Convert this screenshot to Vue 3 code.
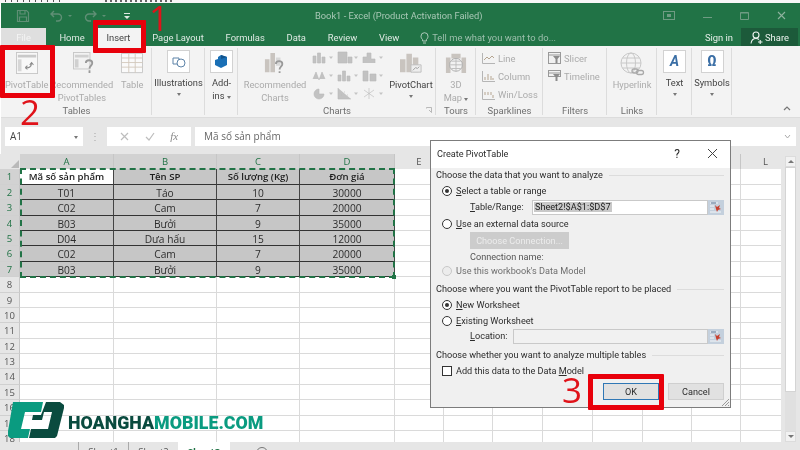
<template>
  <div class="page">
    <div class="top-strip"></div>
    <header class="titlebar">
      <div class="qat">
        <svg class="qat-save" width="14" height="14" viewBox="0 0 14 14"><path d="M1.5 1.5h9l2 2v9h-11z M4 1.5v3.5h5v-3.5 M3.5 12.5v-4.5h7v4.5" fill="none" stroke="#5f8f75" stroke-width="1.2"/></svg>
        <svg class="qat-undo" width="13" height="12" viewBox="0 0 13 12"><path d="M4 1L1 4l3 3M1 4h7a3.4 3.4 0 0 1 0 7H6" fill="none" stroke="#5f8f75" stroke-width="1.4"/></svg>
        <span class="qat-drop"></span>
        <svg class="qat-redo" width="13" height="12" viewBox="0 0 13 12"><path d="M9 1l3 3-3 3M12 4H5a3.4 3.4 0 0 0 0 7h2" fill="none" stroke="#5f8f75" stroke-width="1.4"/></svg>
        <span class="qat-drop"></span>
        <svg class="qat-more" width="8" height="8" viewBox="0 0 8 8"><path d="M1 1h6v1H1zM1 4h6L4 7z" fill="#dfe9e3"/></svg>
      </div>
      <div class="doc-title">Book1 - Excel (Product Activation Failed)</div>
      <div class="win-btns">
        <svg width="12" height="10" viewBox="0 0 12 10"><rect x="0.5" y="0.5" width="11" height="8" fill="none" stroke="#6f9c83"/><rect x="4" y="3" width="4" height="3" fill="#6f9c83"/></svg>
        <svg width="9" height="10" viewBox="0 0 9 10"><path d="M0 6.5h9" stroke="#6f9c83"/></svg>
        <svg width="9" height="10" viewBox="0 0 9 10"><path d="M.5 1.5h8v7h-8z" fill="none" stroke="#6f9c83"/><path d="M.5 2h8" stroke="#6f9c83"/></svg>
        <svg width="9" height="10" viewBox="0 0 9 10"><path d="M1 1l7 7M8 1l-7 7" stroke="#8fb39f" stroke-width="1.1"/></svg>
      </div>
    </header>
    <nav class="tabs">
      <div class="file-tab">File</div>
      <div class="tab" v-for="t in tabs" :key="t" :class="{ on: t === 'Insert' }">{{ t }}</div>
      <div class="tell">
        <svg width="9" height="13" viewBox="0 0 9 13"><path d="M2.6 8.6C1.6 7.7 1 6.6 1 5.2a3.5 3.5 0 0 1 7 0C8 6.6 7.4 7.7 6.4 8.6V10H2.6zM3 12h3" fill="none" stroke="#bcd3c6" stroke-width=".9"/></svg>
        <span>Tell me what you want to do...</span>
      </div>
      <div class="sign">Sign in</div>
      <div class="share">
        <svg width="13" height="13" viewBox="0 0 13 13"><circle cx="6" cy="4" r="3" fill="none" stroke="#eef4f0" stroke-width="1.1"/><path d="M1 12.5c.4-3 2.3-5 5-5 1.2 0 2.2.4 3 1M8 11h4.5M10.2 9v4" fill="none" stroke="#eef4f0" stroke-width="1.1"/></svg>
        <span>Share</span>
      </div>
    </nav>

    <section class="ribbon">
      <div class="grp g-tables">
        <div class="grp-body">
          <div class="big b-pivot">
            <svg viewBox="0 0 24 24"><rect x=".5" y=".5" width="23" height="23" fill="#f8f8f8" stroke="#c6c6c6"/><path d="M2 3h20v3H2z" fill="#c9c9c9"/><path d="M2 8h4v13H2z" fill="#d6d6d6"/><path d="M10 17c4 1 7-1 7-5M15 14l2-2.5 2 2.5M10 17l2.5-2M10 17l2.5 2" fill="none" stroke="#8a8a8a" stroke-width="1.1"/></svg>
            <span>PivotTable</span>
          </div>
          <div class="big b-rec">
            <svg viewBox="0 0 24 24"><rect x=".5" y=".5" width="18" height="18" fill="#f2f2f2" stroke="#c6c6c6"/><path d="M2 3h15v3H2zM2 8h4v9H2z" fill="#d0d0d0"/><path d="M14 12c0-4 7-4 7 0 0 3-3 3-3 6M18 20v3" fill="none" stroke="#9a9a9a" stroke-width="2"/></svg>
            <span>Recommended<br>PivotTables</span>
          </div>
          <div class="big b-table">
            <svg viewBox="0 0 24 22"><path d="M.5.5h23v21H.5z" fill="#fafafa" stroke="#c4c4c4"/><path d="M.5 5.5h23M.5 10.5h23M.5 15.5h23M8.5.5v21M15.5.5v21" stroke="#d2c8bc" fill="none"/></svg>
            <span>Table</span>
          </div>
        </div>
        <div class="grp-label">Tables</div>
      </div>
      <div class="grp g-ill">
        <div class="grp-body">
          <div class="big strong">
            <div class="box-ic">
              <svg width="14" height="14" viewBox="0 0 14 14"><path d="M1 3h6v6H1z" fill="#fff" stroke="#5d83a8"/><circle cx="9" cy="8" r="4" fill="#fff" stroke="#5d83a8"/></svg>
            </div>
            <span>Illustrations</span>
            <i class="caret"></i>
          </div>
        </div>
        <div class="grp-label"></div>
      </div>
      <div class="grp g-add">
        <div class="grp-body">
          <div class="big strong">
            <div class="box-ic">
              <svg width="13" height="13" viewBox="0 0 13 13"><path d="M6 0l6 2v8l-6 3-6-3V5l3-1V2z" fill="#1a6fb5"/><path d="M6 0l6 2-6 2z" fill="#12548c"/></svg>
            </div>
            <span>Add-<br>ins <i class="caret inline"></i></span>
          </div>
        </div>
        <div class="grp-label"></div>
      </div>
      <div class="grp g-charts">
        <div class="grp-body">
          <div class="big b-rchart">
            <svg viewBox="0 0 24 24"><path d="M1 8h5v14H1zM7 1h5v21H7z" fill="#c9c4bf"/><path d="M13 6h5v9h-5z" fill="#d8d8d8"/><path d="M13 13c0-4 7-4 7 0 0 3-3 3-3 6M17 21v2" fill="none" stroke="#9a9a9a" stroke-width="2"/></svg>
            <span>Recommended<br>Charts</span>
          </div>
          <div class="mini-grid">
            <svg v-for="(c, i) in miniCharts" :key="i" width="25" height="13" viewBox="0 0 25 13">
              <path :d="c" fill="#c2c2c2" stroke="#b8b8b8" stroke-width=".6"/>
              <path d="M17 5.5h4L19 8z" fill="#c4c4c4"/>
            </svg>
          </div>
          <div class="big b-pchart">
            <svg viewBox="0 0 24 24"><path d="M0 8h6v14H0zM7 2h6v20H7zM14 6h6v16h-6z" fill="#c9c4bf"/><path d="M12 14h11v8H12z" fill="#ededed" stroke="#bdbdbd"/><path d="M14 20l3-3 2 1 2-2" fill="none" stroke="#9a9a9a"/></svg>
            <span class="dark">PivotChart</span>
            <i class="caret"></i>
          </div>
        </div>
        <div class="grp-label">Charts</div>
        <svg class="launcher" width="6" height="6" viewBox="0 0 6 6"><path d="M.5.5h5v5M.5.5v1M3 3l2.5 2.5" fill="none" stroke="#aaa" stroke-width=".8"/></svg>
      </div>
      <div class="grp g-tours">
        <div class="grp-body">
          <div class="big">
            <svg viewBox="0 0 24 24"><path d="M1 6h5v17H1zM18 6h5v17h-5zM7 2h10v5H7z" fill="#c9c4bf"/><circle cx="12" cy="14" r="7" fill="#f2f2f2" stroke="#aaa"/><path d="M5 14h14M12 7v14M7 10h10M7 18h10" stroke="#bbb" fill="none"/></svg>
            <span>3D<br>Map <i class="caret inline"></i></span>
          </div>
        </div>
        <div class="grp-label">Tours</div>
      </div>
      <div class="grp g-spark">
        <div class="grp-body stack">
          <div class="row-btn" v-for="s in sparks" :key="s.t">
            <svg width="13" height="11" viewBox="0 0 13 11"><path d="M.5 0v10.5H13" fill="none" stroke="#b5b5b5"/><path :d="s.d" fill="none" stroke="#b5a591"/></svg>
            <span>{{ s.t }}</span>
          </div>
        </div>
        <div class="grp-label">Sparklines</div>
      </div>
      <div class="grp g-filter">
        <div class="grp-body stack">
          <div class="row-btn" v-for="s in filters" :key="s.t">
            <svg width="13" height="12" viewBox="0 0 13 12"><rect x=".5" y=".5" width="12" :height="s.h" fill="#f1f1f1" stroke="#999"/><path d="M.5 3h12" stroke="#999"/><path d="M5 4h7L9.5 7v4H7.5V7z" fill="#8c8c8c"/></svg>
            <span>{{ s.t }}</span>
          </div>
        </div>
        <div class="grp-label">Filters</div>
      </div>
      <div class="grp g-links">
        <div class="grp-body">
          <div class="big">
            <svg viewBox="0 0 26 26"><circle cx="12" cy="11" r="10" fill="none" stroke="#c8c8c8"/><ellipse cx="12" cy="11" rx="4.5" ry="10" fill="none" stroke="#c8c8c8"/><path d="M2 11h20M3.5 6h17M3.5 16h17" stroke="#c8c8c8"/><rect x="13" y="17" width="6" height="4" rx="2" fill="none" stroke="#aaa" stroke-width="1.3"/><rect x="17.5" y="18.5" width="7" height="4" rx="2" fill="none" stroke="#aaa" stroke-width="1.3"/></svg>
            <span>Hyperlink</span>
          </div>
        </div>
        <div class="grp-label">Links</div>
      </div>
      <div class="grp g-text">
        <div class="grp-body">
          <div class="big strong">
            <div class="box-ic glyph italic">A</div>
            <span>Text</span>
            <i class="caret"></i>
          </div>
        </div>
        <div class="grp-label"></div>
      </div>
      <div class="grp g-sym">
        <div class="grp-body">
          <div class="big strong">
            <div class="box-ic glyph">Ω</div>
            <span>Symbols</span>
            <i class="caret"></i>
          </div>
        </div>
        <div class="grp-label"></div>
      </div>
      <svg class="collapse" width="8" height="5" viewBox="0 0 8 5"><path d="M1 4l3-3 3 3" fill="none" stroke="#777" stroke-width="1.2"/></svg>
    </section>

    <section class="formula">
      <div class="namebox"><span>A1</span><i class="caret"></i></div>
      <span class="dots">⋮</span>
      <div class="fx-btns">
        <svg width="9" height="9" viewBox="0 0 9 9"><path d="M1 1l7 7M8 1l-7 7" stroke="#bdbdbd" stroke-width="1.2"/></svg>
        <svg width="10" height="9" viewBox="0 0 10 9"><path d="M1 5l3 3 5-7" fill="none" stroke="#bdbdbd" stroke-width="1.2"/></svg>
        <span class="fx">fx</span>
      </div>
      <div class="fx-input">
        <span>Mã số sản phẩm</span>
        <svg width="7" height="5" viewBox="0 0 7 5"><path d="M1 1l2.5 3L6 1" fill="none" stroke="#aaa"/></svg>
      </div>
    </section>

    <section class="sheet-wrap">
      <div class="sheet">
        <div class="grid">
          <div class="corner"><i></i></div>
          <div class="ch" v-for="c in cols" :key="c.n" :class="{ sel: c.sel }" :style="{ width: c.w + 'px' }">{{ c.n }}</div>
          <template v-for="r in rows" :key="r.n">
            <div class="rh" :class="{ sel: r.n <= 7 }">{{ r.n }}</div>
            <div
              v-for="(c, i) in cols"
              :key="c.n"
              class="cell"
              :class="cellClass(r, i)"
              :style="{ width: c.w + 'px' }"
            >{{ r.v[i] }}</div>
          </template>
        </div>
        <div class="scrollbar">
          <span class="sb-btn"><i class="up"></i></span>
          <span class="sb-thumb"></span>
          <span class="sb-track"></span>
          <span class="sb-btn"><i class="down"></i></span>
        </div>
      </div>
      <footer class="sheetbar">
        <span class="sb-left"></span>
        <span class="stab">Sheet1</span>
        <span class="stab">Sheet2</span>
        <span class="stab active">Sheet3</span>
        <span class="plus"></span>
      </footer>
    </section>

    <!-- overlays -->
    <div class="marquee"></div>

    <div class="dialog">
      <div class="dlg-head">
        <span>Create PivotTable</span>
        <div class="dlg-btns"><b>?</b>
          <svg width="11" height="11" viewBox="0 0 11 11"><path d="M1 1l9 9M10 1l-9 9" stroke="#444" stroke-width="1"/></svg>
        </div>
      </div>
      <div class="dlg-body">
        <div class="legend"><span>Choose the data that you want to analyze</span></div>
        <label class="opt"><i class="radio checked"></i><span><u>S</u>elect a table or range</span></label>
        <div class="field f-range">
          <span class="fl"><u>T</u>able/Range:</span>
          <div class="input"><em>Sheet2!$A$1:$D$7</em></div>
          <svg class="picker" width="16" height="15" viewBox="0 0 16 15"><rect width="16" height="15" fill="#c4d0dd"/><path d="M2 3h8M2 6h4M2 9h4M2 12h11" stroke="#f4f7fa"/><path d="M3 3h5" stroke="#5b7594"/><path d="M7 5l2 2 3-2-1 3 2 1-3 1-1 2-1-3z" fill="#c8402f"/></svg>
        </div>
        <label class="opt o-ext"><i class="radio"></i><span><u>U</u>se an external data source</span></label>
        <button class="conn">Choose Connection...</button>
        <div class="conn-name">Connection name:</div>
        <label class="opt off"><i class="radio"></i><span>Use this workbook's Data Model</span></label>

        <div class="legend l2"><span>Choose where you want the PivotTable report to be placed</span></div>
        <label class="opt"><i class="radio checked"></i><span><u>N</u>ew Worksheet</span></label>
        <label class="opt o-exist"><i class="radio"></i><span><u>E</u>xisting Worksheet</span></label>
        <div class="field f-loc">
          <span class="fl"><u>L</u>ocation:</span>
          <div class="input blank"></div>
          <svg class="picker" width="16" height="15" viewBox="0 0 16 15"><rect width="16" height="15" fill="#c4d0dd"/><path d="M2 3h8M2 6h4M2 9h4M2 12h11" stroke="#f4f7fa"/><path d="M3 3h5" stroke="#5b7594"/><path d="M7 5l2 2 3-2-1 3 2 1-3 1-1 2-1-3z" fill="#c8402f"/></svg>
        </div>

        <div class="legend l3"><span>Choose whether you want to analyze multiple tables</span></div>
        <label class="opt chk"><i class="check"></i><span>Add this data to the Data <u>M</u>odel</span></label>
        <div class="dlg-actions">
          <button class="ok">OK</button>
          <button>Cancel</button>
        </div>
      </div>
      <svg class="grip" width="10" height="10" viewBox="0 0 10 10"><path d="M9 2L2 9M9 5L5 9M9 8L8 9" stroke="#9a9a9a"/></svg>
    </div>

    <span class="mark m-insert"></span>
    <span class="mark m-pivot"></span>
    <span class="mark m-ok"></span>
    <span class="num n1">1</span>
    <span class="num n2">2</span>
    <span class="num n3">3</span>

    <div class="logo">
      <svg width="58" height="40" viewBox="0 0 58 40">
        <path d="M6 2h30l-2 10H18l-4 17h9l-2 9H3l-2-2v-5z" fill="#0a9b80"/>
        <path d="M39 2h14l4 3v3l-7 28-2 2H22l2-9h17l4-17h-8l-2 8H25l1-5h8z" fill="#0a4b3f"/>
      </svg>
      <div class="logo-text">HOANGHA<span>MOBILE.COM</span></div>
    </div>
  </div>
</template>

<script setup>
const tabs = ['Home', 'Insert', 'Page Layout', 'Formulas', 'Data', 'Review', 'View']

const miniCharts = [
  'M1 5h3v7H1zM5.5 2h3v10h-3zM10 6h3v6h-3z',
  'M1 1h9v11H1zM11 6h4v6h-4z',
  'M1 12V6h4V2h4v6h4v4',
  'M1 10l3-7 3 8 3-8 3 7',
  'M1 6h3v6H1zM5.5 2h3v10h-3zM10 7h3v5h-3z',
  'M1 2h5v10H1zM8 5h6v7H8z',
  'M7 2a5 5 0 1 0 5 5H7z',
  'M1 1v11h13M4 8h1M7 5h1M10 8h1',
  'M7 1v11M2 3l10 7M12 3L2 10',
]

const sparks = [
  { t: 'Line', d: 'M2 7l3-3 2 2 3-3 2 2' },
  { t: 'Column', d: 'M3 9V6M6 9V3M9 9V5M11 9V7' },
  { t: 'Win/Loss', d: 'M3 3v3M6 3v3M9 3v3M11 6v3' },
]

const filters = [
  { t: 'Slicer', h: 11 },
  { t: 'Timeline', h: 6 },
]

const cols = [
  { n: 'A', w: 94, sel: true },
  { n: 'B', w: 103, sel: true },
  { n: 'C', w: 83, sel: true },
  { n: 'D', w: 95, sel: true },
  { n: 'E', w: 49 },
  { n: 'F', w: 49 },
  { n: 'G', w: 50 },
  { n: 'H', w: 50 },
  { n: 'I', w: 50 },
  { n: 'J', w: 49 },
  { n: 'K', w: 49 },
  { n: 'L', w: 50 },
]

const data = [
  ['Mã số sản phẩm', 'Tên SP', 'Số lượng (Kg)', 'Đơn giá'],
  ['T01', 'Táo', '10', '30000'],
  ['C02', 'Cam', '7', '20000'],
  ['B03', 'Bưởi', '9', '35000'],
  ['D04', 'Dưa hấu', '15', '12000'],
  ['C02', 'Cam', '7', '20000'],
  ['B03', 'Bưởi', '9', '35000'],
]

const rows = Array.from({ length: 18 }, (_, i) => ({ n: i + 1, v: data[i] || [] }))

function cellClass(r, i) {
  if (r.n > 7 || i > 3) return ''
  return {
    tbl: true,
    head: r.n === 1,
    first: r.n === 1 && i === 0,
  }
}
</script>

<style>
html, body { margin: 0; background: #fff; }
</style>

<style scoped>
.page {
  position: relative; width: 800px; height: 450px; overflow: hidden;
  background: #fff; color: #333;
  font-family: Roboto, "Noto Sans", sans-serif; font-size: 10px;
  filter: blur(0.35px);
}
.top-strip {
  height: 3px; background-color: #f7f7f7;
  background-image:
    repeating-linear-gradient(90deg, #555 0 1px, transparent 1px 6px),
    repeating-linear-gradient(90deg, #666 0 2px, transparent 2px 5px);
  background-size: 60px 2px, 70px 2px;
  background-position: 5px 0, 105px 0;
  background-repeat: no-repeat;
}
.titlebar {
  display: flex; align-items: center; height: 25px; margin-left: 1px;
  background: #217346; position: relative;
}
.qat { display: flex; align-items: center; padding-left: 15px; width: 300px; }
.qat-save { margin-right: 20px; }
.qat-undo { margin-right: 5px; }
.qat-redo { margin: 0 5px 0 12px; }
.qat-drop { width: 0; height: 0; border: 2px solid transparent; border-top: 2px solid #5f8f75; margin-top: 2px; }
.qat-more { margin-left: 17px; }
.doc-title { position: absolute; left: 314px; top: 7px; font-size: 9.3px; color: #a9c8b6; white-space: nowrap; }
.win-btns { margin-left: auto; display: flex; align-items: center; gap: 28px; padding-right: 14px; }

.tabs { display: flex; align-items: stretch; height: 18px; margin-left: 1px; background: #217346; color: #dfeae4; font-size: 9.4px; }
.file-tab { width: 45px; background: #dfdfdf; color: #f4f4f4; display: flex; align-items: center; justify-content: center; margin-right: 2.5px; }
.tab { padding: 0 10.9px; display: flex; align-items: center; white-space: nowrap; }
.tab.on { background: #f3f3f3; color: #444; }
.tell { display: flex; align-items: center; gap: 3px; margin-left: 10px; color: #9dbfad; font-size: 9.4px; }
.sign { margin-left: auto; display: flex; align-items: center; margin-right: 8px; color: #e6efe9; }
.share { width: 57px; background: #1c5a3a; display: flex; align-items: center; gap: 2px; justify-content: center; color: #eef4f0; margin-right: 2px; }

.ribbon { display: flex; height: 72px; background: #f3f3f3; border-bottom: 1px solid #dcdcdc; position: relative; margin-left: 1px; box-sizing: border-box; color: #ababab; }
.grp { position: relative; display: flex; flex-direction: column; box-sizing: border-box; flex: none; }
.grp::after { content: ""; position: absolute; right: 0; top: 2px; bottom: 2px; width: 1px; background: #dcdcdc; }
.grp-body { flex: 1; display: flex; min-height: 0; }
.grp-label { height: 12px; line-height: 12px; text-align: center; font-size: 9.5px; color: #707070; flex: none; }
.g-tables { width: 151px; }
.g-ill { width: 53px; }
.g-add { width: 33px; }
.g-charts { width: 198px; }
.g-tours { width: 40px; }
.g-spark { width: 67px; }
.g-filter { width: 64px; }
.g-links { width: 50px; }
.g-text { width: 35px; }
.g-sym { width: 40px; }

.big { display: flex; flex-direction: column; align-items: center; padding-top: 6px; line-height: 13px; font-size: 9.3px; text-align: center; white-space: nowrap; box-sizing: border-box; }
.big > svg { display: block; width: 22px; height: 22px; margin-bottom: 4px; flex: none; }
.b-pivot { width: 52px; }
.b-rec { width: 66px; margin-left: -3px; margin-right: -4px; }
.b-rec > svg { margin-left: 4px; }
.b-table { width: 40px; margin-left: 2px; }
.strong { width: 100%; color: #444; padding-top: 4px; }
.box-ic {
  width: 23px; height: 23px; background: #fff; border: 1px solid #d2d2d2; display: flex; align-items: center;
  justify-content: center; margin-bottom: 3px; color: #3a6ea5; font-size: 14px; font-weight: 700; box-sizing: border-box; flex: none;
}
.glyph.italic { font-style: italic; }
.caret { display: block; width: 0; height: 0; border: 2.5px solid transparent; border-top: 3px solid #777; margin-top: 4px; }
.caret.inline { display: inline-block; vertical-align: middle; margin: 3px 0 0; }
.b-rchart { width: 74px; }
.mini-grid { width: 75px; padding-top: 5px; display: grid; grid-template-columns: repeat(3, 25px); grid-auto-rows: 18px; }
.b-pchart { width: 48px; }
.dark { color: #444; }
.launcher { position: absolute; right: 4px; bottom: 4px; }
.stack { flex-direction: column; padding: 3px 0 0 6px; }
.row-btn { display: flex; align-items: center; gap: 3px; height: 18px; font-size: 9.4px; white-space: nowrap; }
.g-filter .stack { padding-left: 5px; }
.g-links .big, .g-tours .big { width: 100%; }
.g-links .big > svg { width: 26px; height: 26px; margin-bottom: 0; }
.collapse { position: absolute; right: 9px; bottom: 6px; }

.formula { display: flex; align-items: center; height: 36px; background: #e6e6e6; margin-left: 1px; padding-left: 4px; box-sizing: border-box; font-family: "Open Sans", sans-serif; }
.namebox { width: 78px; height: 19px; background: #fff; display: flex; align-items: center; justify-content: space-between; padding: 0 5px; box-sizing: border-box; color: #444; font-size: 10px; }
.namebox .caret { margin-top: 4px; }
.dots { width: 24px; text-align: center; color: #aaa; font-size: 10px; }
.fx-btns { width: 84px; height: 19px; background: #fff; display: flex; align-items: center; justify-content: space-around; padding: 0 5px; box-sizing: border-box; }
.fx { font-family: "Liberation Serif", serif; font-style: italic; font-size: 11px; color: #888; }
.fx-input { flex: 1; height: 19px; margin: 0 4px; background: #fff; padding: 0 5px 0 9px; color: #666; font-size: 10px; display: flex; align-items: center; justify-content: space-between; }

.sheet-wrap { background: #e6e6e6; }
.sheet { display: flex; height: 288px; overflow: hidden; font-family: "Open Sans", sans-serif; }
.grid { width: 781px; height: 288px; overflow: hidden; flex: none; display: grid; grid-template-columns: 20px repeat(12, auto); grid-auto-rows: 15.4px; align-content: start; justify-content: start; }
.corner { height: 15.4px; background: #e6e6e6; position: relative; }
.corner i { position: absolute; right: 1px; bottom: 1px; border: 4px solid transparent; border-right-color: #b9b9b9; border-bottom-color: #b9b9b9; }
.ch { background: #e6e6e6; border-right: 1px solid #c6c6c6; box-sizing: border-box; text-align: center; line-height: 16px; color: #555; font-size: 9.5px; }
.ch.sel { background: #d2d2d2; color: #217346; }
.rh { background: #e6e6e6; border-bottom: 1px solid #d0d0d0; border-right: 1px solid #c6c6c6; box-sizing: border-box; text-align: center; line-height: 16px; color: #555; font-size: 9.5px; }
.rh.sel { background: #d2d2d2; color: #217346; }
.cell { background: #fff; box-sizing: border-box; border-right: 1px solid #dadada; border-bottom: 1px solid #dadada; text-align: center; line-height: 16px; white-space: nowrap; color: #333; font-size: 10.2px; }
.cell.tbl { background: #c6c6c6; border-right: 1px solid #444; border-bottom: 1px solid #333; color: #2d2d2d; }
.cell.head { font-weight: 600; font-size: 9.6px; color: #1c1c1c; }
.cell.first { background: #fff; }

.scrollbar { flex: 1; display: flex; flex-direction: column; padding: 2px 4px 0; background: #e6e6e6; }
.sb-btn { height: 11px; background: #f2f2f2; border: 1px solid #dcdcdc; box-sizing: border-box; flex: none; display: flex; align-items: center; justify-content: center; }
.sb-btn i { border: 3px solid transparent; }
.sb-btn .up { border-bottom-color: #777; margin-top: -3px; }
.sb-btn .down { border-top-color: #777; margin-top: 3px; }
.sb-thumb { height: 225px; background: #fff; border: 1px solid #d4d4d4; box-sizing: border-box; flex: none; }
.sb-track { flex: 1; background: #e0e0e0; }

.sheetbar { display: flex; align-items: flex-start; height: 8px; background: #e6e6e6; color: #555; font-size: 9.5px; overflow: hidden; font-family: "Open Sans", sans-serif; }
.sb-left { width: 78px; }
.stab { width: 50px; height: 8px; border-left: 1px solid #aaa; text-align: center; line-height: 12px; box-sizing: border-box; padding-top: 4px; white-space: nowrap; }
.stab.active { width: 52px; background: #fff; font-weight: 700; color: #217346; border-left: 0; }
.plus { margin-left: 26px; margin-top: 5px; width: 10px; height: 10px; border: 1px solid #777; border-radius: 50%; }

.marquee {
  position: absolute; left: 20px; top: 168px; width: 375px; height: 110px; box-sizing: border-box;
  border: 2px dashed #217346;
}
.marquee::after { content: ""; position: absolute; right: -3px; bottom: -3px; width: 4px; height: 4px; background: #217346; }

.dialog {
  position: absolute; left: 430px; top: 140px; width: 301px; height: 268px; box-sizing: border-box;
  background: #f0f0f0; border: 1px solid #7c7c7c; color: #2c2c2c; font-size: 9.15px;
  display: flex; flex-direction: column;
}
.dlg-head { height: 27px; background: #fff; display: flex; align-items: center; justify-content: space-between; padding: 0 12px 2px 6px; flex: none; box-sizing: border-box; }
.dlg-btns { display: flex; align-items: center; gap: 27px; }
.dlg-btns b { font-weight: 400; font-size: 12px; }
.dlg-body { padding: 0 6px 0 5px; flex: 1; display: flex; flex-direction: column; }
.legend { height: 14px; display: flex; align-items: center; gap: 6px; flex: none; white-space: nowrap; }
.legend::after { content: ""; flex: 1; height: 1px; background: #dcdcdc; }
.legend.l2 { margin-top: 5px; }
.legend.l3 { margin-top: 4px; }
.opt { display: flex; align-items: center; gap: 4px; height: 16px; padding-left: 6px; flex: none; white-space: nowrap; margin-top: 1px; }
.o-exist { height: 15px; margin-top: 0; }
.opt.off { color: #6e6e6e; height: 12px; margin-top: 0; }
.radio { width: 10px; height: 10px; border-radius: 50%; border: 1px solid #333; background: #fff; display: block; position: relative; flex: none; box-sizing: border-box; }
.radio.checked::after { content: ""; position: absolute; inset: 2px; border-radius: 50%; background: #333; }
.off .radio { border-color: #c8c8c8; background: #ececec; }
.check { width: 10px; height: 10px; border: 1px solid #333; background: #fff; display: block; flex: none; box-sizing: border-box; }
.field { display: flex; align-items: center; height: 16px; padding-left: 34px; flex: none; }
.f-range .fl { width: 62px; flex: none; }
.f-loc .fl { width: 43px; flex: none; }
.input { flex: 1; height: 15px; background: #fff; border: 1px solid #c9c9c9; box-sizing: border-box; line-height: 13px; padding-left: 1px; }
.input.blank { background: #f1f1f1; }
.input em { font-style: normal; background: #c9c9c9; color: #222; padding: 0 1px; }
.picker { display: block; flex: none; }
.conn { display: block; align-self: flex-start; margin: 0 0 0 34px; width: 99px; height: 17px; background: #cccccc; border: 0; color: #ececec; font: inherit; padding: 0; white-space: nowrap; flex: none; }
.conn-name { padding-left: 34px; height: 16px; line-height: 16px; color: #555; flex: none; }
.dlg-actions { display: flex; justify-content: flex-end; gap: 9px; margin-top: 4px; }
.dlg-actions button { width: 56px; height: 17px; background: #e1e1e1; border: 1px solid #cfcfcf; font: inherit; color: #2c2c2c; padding: 0; box-sizing: border-box; }
.dlg-actions .ok { border: 1.5px solid #2f77b5; }
.grip { position: absolute; right: 0; bottom: 0; }

.mark { position: absolute; border: 5px solid #e8000b; box-sizing: border-box; border-radius: 1px; }
.m-insert { left: 93px; top: 20px; width: 53px; height: 33px; }
.m-pivot { left: 0; top: 45px; width: 55px; height: 53px; }
.m-ok { left: 588px; top: 374px; width: 76px; height: 36px; }
.num { position: absolute; color: #e0131a; font-family: "Open Sans", sans-serif; line-height: 28px; font-size: 35px; }
.n1 { left: 149px; top: 4px; }
.n2 { left: 20px; top: 98px; }
.n3 { left: 562px; top: 376px; }

.logo { position: absolute; left: 7px; top: 400px; display: flex; align-items: center; gap: 3px; }
.logo svg { display: block; flex: none; }
.logo-text { font-family: Roboto, sans-serif; font-weight: 900; font-size: 17.8px; color: #0a4b3f; margin-top: 5px; white-space: nowrap; }
.logo-text span { color: #0a9b80; }
</style>
